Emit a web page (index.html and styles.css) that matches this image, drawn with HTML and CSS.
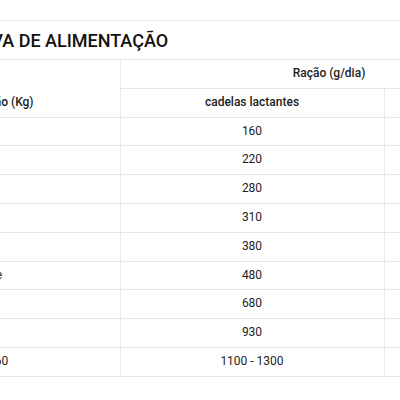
FILE: index.html
```html
<!DOCTYPE html>
<html lang="pt">
<head>
<meta charset="utf-8">
<link rel="stylesheet" href="styles.css">
</head>
<body>
<section class="feed">
  <h2 class="feed-title">TABELA INDICATIVA DE ALIMENTAÇÃO</h2>
  <table class="feed-table">
    <colgroup>
      <col class="c-weight">
      <col class="c-lact">
      <col class="c-other">
    </colgroup>
    <thead>
      <tr>
        <th class="h-weight" rowspan="2">Peso do cão (Kg)</th>
        <th colspan="2">Ração (g/dia)</th>
      </tr>
      <tr>
        <th>cadelas lactantes</th>
        <th>cadelas gestantes</th>
      </tr>
    </thead>
    <tbody>
      <tr><td>2</td><td>160</td><td>90</td></tr>
      <tr><td>4</td><td>220</td><td>130</td></tr>
      <tr><td>6</td><td>280</td><td>170</td></tr>
      <tr><td>8</td><td>310</td><td>200</td></tr>
      <tr><td>10</td><td>380</td><td>230</td></tr>
      <tr><td>Porte</td><td>480</td><td>290</td></tr>
      <tr><td>20</td><td>680</td><td>400</td></tr>
      <tr><td>30</td><td>930</td><td>540</td></tr>
      <tr><td>51 – 60</td><td>1100 - 1300</td><td>650 - 800</td></tr>
    </tbody>
  </table>
</section>
</body>
</html>
```

FILE: styles.css
```css
html, body {
  margin: 0;
  padding: 0;
  overflow: hidden;
  background: #fff;
}

body {
  font-family: Roboto, "Liberation Sans", sans-serif;
  color: #222;
}

.feed {
  margin-top: 20px;
  margin-left: -144px;
  width: 690px;
  border-top: 1px solid #ebebeb;
}

.feed-title {
  margin: 0;
  height: 38px;
  line-height: 40px;
  font-size: 18px;
  font-weight: 500;
  color: #111;
  text-indent: -8px;
  white-space: nowrap;
}

.feed-table {
  border-collapse: collapse;
  table-layout: fixed;
  width: 682px;
  font-size: 12px;
  line-height: 13.8px;
}

.c-weight { width: 264px; }
.c-lact { width: 264px; }
.c-other { width: 154px; }

.feed-table th,
.feed-table td {
  padding: 7px 6px;
  text-align: center;
  border-top: 1px solid #e8e8ea;
  border-right: 1px solid #e9ebef;
  white-space: nowrap;
}

.feed-table th {
  font-weight: 500;
  color: #1c1c1c;
}

.feed-table .h-weight {
  vertical-align: bottom;
}

.feed-table tbody tr:last-child td {
  border-bottom: 1px solid #e8e8ea;
}
```
